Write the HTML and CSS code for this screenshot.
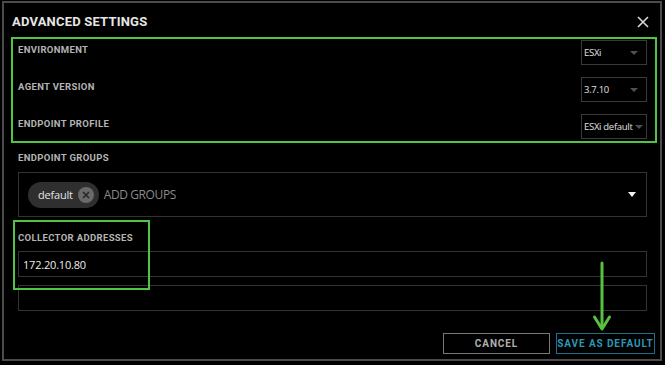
FILE: index.html
```html
<!DOCTYPE html>
<html>
<head>
<meta charset="utf-8">
<link rel="stylesheet" href="styles.css">
</head>
<body>
<div class="dialog">
  <div class="header">
    <div class="title">ADVANCED SETTINGS</div>
    <svg class="close" width="12" height="12" viewBox="0 0 12 12"><path d="M1 1L11 11M11 1L1 11" stroke="#d8d8d8" stroke-width="1.6" fill="none"/></svg>
  </div>
  <div class="body">
    <div class="green-group">
      <div class="row">
        <div class="label">ENVIRONMENT</div>
        <div class="select"><span>ESXi</span><i class="caret"></i></div>
      </div>
      <div class="row">
        <div class="label">AGENT VERSION</div>
        <div class="select"><span>3.7.10</span><i class="caret"></i></div>
      </div>
      <div class="row">
        <div class="label">ENDPOINT PROFILE</div>
        <div class="select"><span>ESXi default</span><i class="caret"></i></div>
      </div>
    </div>

    <div class="label sec-label">ENDPOINT GROUPS</div>
    <div class="groups">
      <div class="chip">
        <span>default</span>
        <svg class="chip-x" width="16" height="16" viewBox="0 0 16 16"><circle cx="8" cy="8" r="8" fill="#6a6a6a"/><path d="M5 5L11 11M11 5L5 11" stroke="#262626" stroke-width="1.6"/></svg>
      </div>
      <div class="placeholder">ADD GROUPS</div>
      <i class="caret-white"></i>
    </div>

    <div class="collector">
      <div class="label col-label">COLLECTOR ADDRESSES</div>
      <div class="input">172.20.10.80</div>
      <div class="input"></div>
      <div class="highlight"></div>
    </div>

    <div class="footer">
      <div class="btn cancel">CANCEL</div>
      <div class="btn save">SAVE AS DEFAULT</div>
      <svg class="arrow" width="20" height="72" viewBox="0 0 20 72"><path d="M10 2V66" stroke="#56c23f" stroke-width="3" stroke-linecap="round"/><path d="M2.5 56L10 68L17.5 56" stroke="#56c23f" stroke-width="3" fill="none" stroke-linecap="round" stroke-linejoin="round"/></svg>
    </div>
  </div>
</div>
</body>
</html>
```

FILE: styles.css
```css
* { box-sizing: border-box; }
html, body { margin: 0; padding: 0; background: #000; }
body { width: 665px; height: 365px; overflow: hidden; }

.dialog {
  margin: 1px 0 0 2px;
  width: 660px;
  height: 360px;
  border: 2px solid #4b4b4b;
  background: #000;
  position: relative;
}

.header {
  height: 36px;
  display: flex;
  align-items: center;
  justify-content: space-between;
  padding: 1px 11px 0 8px;
}
.title {
  font-family: "Roboto", sans-serif;
  font-weight: bold;
  font-size: 13px;
  letter-spacing: 0.2px;
  color: #e6e6e6;
}
.close { margin-top: 1px; }

.body { padding: 0 13px 0 14px; }

.green-group {
  margin: -2px -10px 0 -7px;
  border: 2px solid #52c443;
  padding: 1px 8px 2px 5px;
  display: flex;
  flex-direction: column;
  gap: 12px;
}
.row {
  height: 25px;
  display: flex;
  align-items: center;
  justify-content: space-between;
}
.row .label { margin-top: -5px; }

.label {
  font-family: "Roboto", sans-serif;
  font-weight: bold;
  font-size: 9.5px;
  letter-spacing: 0.35px;
  color: #b4b4b4;
  line-height: 14px;
}

.select {
  width: 66px;
  height: 25px;
  border: 1px solid #3a3a3a;
  display: flex;
  align-items: center;
  justify-content: space-between;
  padding: 0 8px 0 2px;
  font-family: "Open Sans", sans-serif;
  font-size: 9.5px;
  letter-spacing: -0.3px;
  color: #e0e0e0;
}
.caret {
  width: 0; height: 0;
  border-left: 4px solid transparent;
  border-right: 4px solid transparent;
  border-top: 4px solid #505050;
}
.row:last-child .select { padding-right: 3px; }

.sec-label { margin-top: 8px; }

.groups {
  margin-top: 7px;
  height: 45px;
  border: 1px solid #333;
  display: flex;
  align-items: center;
  padding: 0 10px 0 9px;
}
.chip {
  height: 26px;
  border-radius: 13px;
  background: #2f2f2f;
  display: flex;
  align-items: center;
  padding: 0 5px 0 10px;
  gap: 5px;
  font-family: "Open Sans", sans-serif;
  font-size: 11px;
  letter-spacing: -0.2px;
  color: #e4e4e4;
}
.placeholder {
  margin-left: 5px;
  font-family: "Open Sans", sans-serif;
  font-size: 12px;
  letter-spacing: -0.4px;
  color: #8a8a8a;
  flex: 1;
}
.caret-white {
  width: 0; height: 0;
  border-left: 4.5px solid transparent;
  border-right: 4.5px solid transparent;
  border-top: 5px solid #f2f2f2;
}

.collector {
  position: relative;
  margin-top: 14px;
}
.col-label { margin-bottom: 6px; }
.input {
  height: 26px;
  border: 1px solid #333;
  margin-bottom: 8px;
  display: flex;
  align-items: center;
  padding-left: 4px;
  font-family: "Open Sans", sans-serif;
  font-size: 11px;
  letter-spacing: -0.2px;
  color: #ececec;
}
.input:last-of-type { margin-bottom: 0; }
.highlight {
  position: absolute;
  left: -5px;
  top: -11px;
  width: 137px;
  height: 70px;
  border: 2px solid #52c443;
}

.footer {
  position: relative;
  margin: 22px -8px 0 0;
  display: flex;
  justify-content: flex-end;
  gap: 6px;
}
.btn {
  height: 21px;
  display: flex;
  align-items: center;
  justify-content: center;
  white-space: nowrap;
  font-family: "Roboto", sans-serif;
  font-weight: bold;
  font-size: 10px;
  letter-spacing: 0.9px;
}
.cancel {
  width: 107px;
  border: 1px solid #777;
  color: #b0b0b0;
}
.save {
  width: 99px;
  border: 1px solid #1c6f86;
  color: #2d97b3;
}
.arrow {
  position: absolute;
  right: 43px;
  top: -72px;
}
```
